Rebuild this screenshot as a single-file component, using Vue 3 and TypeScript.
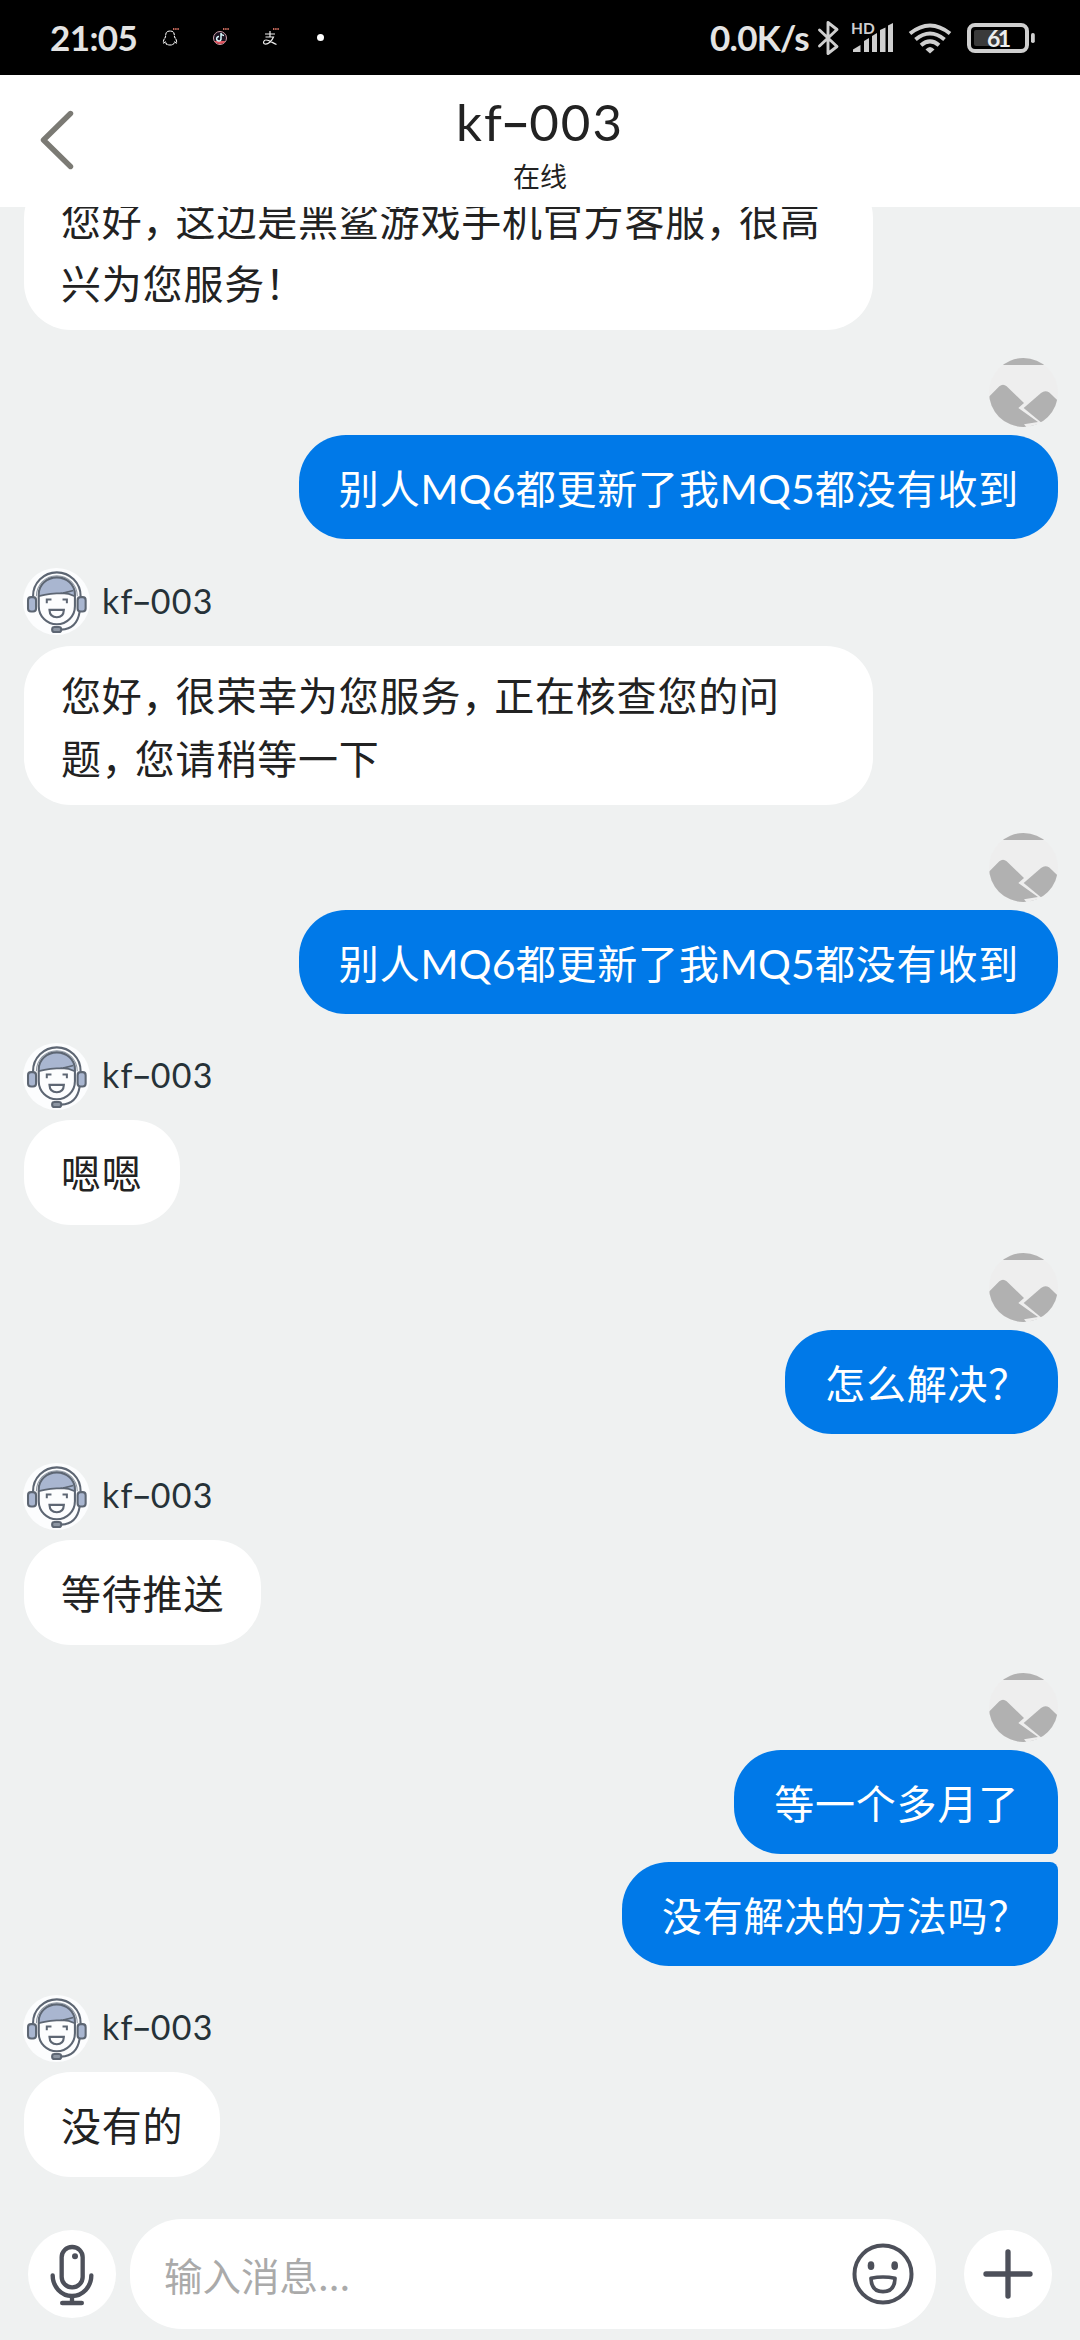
<script setup lang="ts">
interface Bubble {
  lines: string[]
}
interface Group {
  from: 'agent' | 'user'
  headless?: boolean
  bubbles: Bubble[]
}
interface Run {
  text: string
  kind: 'han' | 'comma' | 'mark' | 'latin'
}

const agentName = ['kf', '-', '003']

const groups: Group[] = [
  {
    from: 'agent',
    headless: true,
    bubbles: [{ lines: ['您好，这边是黑鲨游戏手机官方客服，很高', '兴为您服务！'] }],
  },
  { from: 'user', bubbles: [{ lines: ['别人MQ6都更新了我MQ5都没有收到'] }] },
  {
    from: 'agent',
    bubbles: [{ lines: ['您好，很荣幸为您服务，正在核查您的问', '题，您请稍等一下'] }],
  },
  { from: 'user', bubbles: [{ lines: ['别人MQ6都更新了我MQ5都没有收到'] }] },
  { from: 'agent', bubbles: [{ lines: ['嗯嗯'] }] },
  { from: 'user', bubbles: [{ lines: ['怎么解决？'] }] },
  { from: 'agent', bubbles: [{ lines: ['等待推送'] }] },
  {
    from: 'user',
    bubbles: [{ lines: ['等一个多月了'] }, { lines: ['没有解决的方法吗？'] }],
  },
  { from: 'agent', bubbles: [{ lines: ['没有的'] }] },
]

function kindOf(text: string): Run['kind'] {
  if (text === '，') return 'comma'
  if (/[！？]/.test(text)) return 'mark'
  return /[A-Z0-9]/.test(text) ? 'latin' : 'han'
}

// Punctuation is set tighter than the ideographs around it.
function runs(line: string): Run[] {
  const parts = line.match(/[，！？]|[A-Z0-9]+|[^，！？A-Z0-9]+/g) ?? []
  return parts.map((text) => ({ text, kind: kindOf(text) }))
}
</script>

<template>
  <div class="screen">
    <div class="status">
      <span class="clock">21:05</span>
      <div class="notices">
        <svg width="20" height="24" viewBox="0 0 20 24">
          <path d="M9 5C5 5 4.500 8 4.500 11C3 13 2 15 2.500 17L4.500 16C5 18 6 19 9 19C12 19 13 18 13.500 16L15.500 17C16 15 15 13 13.500 11C13.500 8 13 5 9 5Z" fill="none" stroke="#eee" stroke-width="1.100" stroke-dasharray="3 0.600" />
          <path d="M12 3h6" stroke="#c96a5c" stroke-width="2" stroke-dasharray="1.400 0.800" />
        </svg>
        <svg width="20" height="24" viewBox="0 0 20 24">
          <circle cx="9" cy="12" r="6.500" fill="#1b1220" stroke="#cfa3ad" stroke-width="1" />
          <path d="M3.500 15H14.500A6.500 6.500 0 0 1 3.500 15Z" fill="#e0555f" />
          <path d="M10 7V12.500A2.200 2.200 0 1 1 8 10.600M10 7.500Q11 9.500 13 9.500" fill="none" stroke="#d8fbff" stroke-width="1.500" />
          <path d="M12 3h6" stroke="#c96a5c" stroke-width="2" stroke-dasharray="1.400 0.800" />
        </svg>
        <svg width="20" height="24" viewBox="0 0 20 24">
          <path d="M4 8H14M9 5V11M4.500 11H12.500C11 15 7 18.500 4 18C1.500 17.500 2.500 14 5 14C8 14 11 16.500 15.500 18.500" fill="none" stroke="#eee" stroke-width="1.200" />
          <path d="M12 3h6" stroke="#c96a5c" stroke-width="2" stroke-dasharray="1.400 0.800" />
        </svg>
        <i class="more"></i>
      </div>
      <span class="speed">0.0K/s</span>
      <svg class="radio" width="222" height="40" viewBox="814 17 222 40">
        <path d="M819.500 29L837 45.500L828 52.500V21.500L837 28.500L819.500 45" fill="none" stroke="#cfcfcf" stroke-width="2.900" stroke-linejoin="round" stroke-linecap="round" />
        <text x="851" y="32.500" class="hd">HD</text>
        <g fill="#cfcfcf">
          <path d="M853 51V48.500L860.500 44V51Z" />
          <path d="M864 51V40L869 37V51Z" />
          <path d="M872 51V35L877 32V51Z" />
          <path d="M880 51V29L885.500 26.500V51Z" />
          <path d="M888 51V24.500L893 22V51Z" />
          <path d="M930 52.500L925.500 48.500Q930 43.500 934.500 48.500Z" />
        </g>
        <g fill="none" stroke="#cfcfcf" stroke-width="4">
          <path d="M910 32.500Q930 16.500 950 32.500" />
          <path d="M915.500 38.500Q930 26.500 944.500 38.500" />
          <path d="M921 44.300Q930 36.500 939 44.300" />
        </g>
        <rect x="969" y="24" width="58" height="26" rx="6" fill="none" stroke="#cfcfcf" stroke-width="4" />
        <rect x="974" y="29" width="30" height="16" rx="2" fill="#3a3a3a" />
        <rect x="1031" y="32" width="3.800" height="10" rx="1.800" fill="#cfcfcf" />
        <text x="987" y="45.500" class="level">61</text>
      </svg>
    </div>

    <header class="header">
      <svg class="back" width="36" height="62" viewBox="0 0 36 62">
        <path d="M32.500 4.500L5.500 31L32.500 57.500" fill="none" stroke="#7b7a74" stroke-width="5.400" stroke-linejoin="round" stroke-linecap="round" />
      </svg>
      <div class="heading">
        <h1 class="title"><span>{{ agentName[0] }}</span><span class="dash">{{ agentName[1] }}</span><span>{{ agentName[2] }}</span></h1>
        <p class="presence">在线</p>
      </div>
    </header>

    <main class="chat">
      <section v-for="(group, g) in groups" :key="g" class="group" :class="[group.from, { headless: group.headless }]">
        <div v-if="!group.headless && group.from === 'agent'" class="sender">
          <svg class="face" width="67" height="67" viewBox="0 0 200 200">
            <circle cx="100" cy="100" r="100" fill="#fcfdfe" />
            <path d="M47 84V76A54 49 0 0 1 155 76V84Q130 74 112 76Q80 76 47 84Z" fill="#a9b6d0" />
            <g fill="none" stroke="#5d6673" stroke-width="6.200">
              <path d="M30 84A71 71 0 0 1 172 84" />
              <path d="M40 84A61 61 0 0 1 162 84" stroke-width="3" stroke="#8d96a3" />
              <path d="M47 78V114A54 54 0 0 0 155 114V78A54 50 0 0 0 47 78Z" />
              <path d="M47 84Q80 75 120 75L150 67M112 75Q135 74 155 84" stroke-width="5" />
              <rect x="15" y="87" width="24" height="43" rx="9" fill="#a9b6d0" />
              <rect x="163" y="87" width="24" height="43" rx="9" fill="#a9b6d0" />
              <path d="M71 105V94H85M118 94H131V105" stroke-width="6" />
              <path d="M79 125H122Q121 147 101 147Q80 147 79 125Z" />
              <path d="M169 131Q161 182 114 184" />
              <rect x="87" y="176" width="27" height="15" rx="7" fill="#8d96a3" />
            </g>
          </svg>
          <span class="name"><span>{{ agentName[0] }}</span><span class="dash">{{ agentName[1] }}</span><span>{{ agentName[2] }}</span></span>
        </div>
        <svg v-if="group.from === 'user'" class="portrait" width="69" height="69" viewBox="0 0 207 207">
          <g fill="#b1b1b1">
            <rect width="207" height="207" fill="#eee" />
            <rect width="207" height="21" />
            <path d="M0 116L31 85Q42 76 53 85L105 135L88 150L147 192L105 199L112 207H0Z" />
            <path d="M104 150L156 105Q168 95 180 103L207 128V207H175L154 191Z" />
            <path d="M123 205L146 199V201L128 207Z" />
          </g>
        </svg>
        <div
          v-for="(bubble, b) in group.bubbles"
          :key="b"
          class="bubble"
          :class="{
            tall: bubble.lines.length > 1,
            opens: group.bubbles.length > 1 && b === 0,
            closes: group.bubbles.length > 1 && b === group.bubbles.length - 1,
          }"
        >
          <p v-for="line in bubble.lines" :key="line" class="line"><span v-for="(run, r) in runs(line)" :key="r" :class="run.kind">{{ run.text }}</span></p>
        </div>
      </section>
    </main>

    <footer class="composer">
      <button class="round">
        <svg width="88" height="88" viewBox="0 0 264 264" fill="none" stroke="#4d505a" stroke-linecap="round">
          <rect x="101" y="51" width="63" height="121" rx="31" stroke-width="13" />
          <path d="M74 136A58 62 0 0 0 190 136M132 198V218" stroke-width="13" />
          <path d="M103 219H161" stroke-width="14" />
          <circle cx="141" cy="79" r="9" fill="#4d505a" stroke="none" />
        </svg>
      </button>
      <div class="field">
        <span class="hint">输入消息...</span>
        <svg width="62" height="62" viewBox="0 0 186 186" fill="none" stroke="#4d505a">
          <circle cx="93" cy="93" r="85.500" stroke-width="12" />
          <ellipse cx="57" cy="68" rx="10" ry="13" fill="#4d505a" stroke="none" />
          <ellipse cx="128" cy="68" rx="10" ry="13" fill="#4d505a" stroke="none" />
          <path d="M57 106Q93 98 129 106Q128 146 93 146Q58 146 57 106Z" stroke-width="11" stroke-linejoin="round" />
        </svg>
      </div>
      <button class="round">
        <svg width="88" height="88" viewBox="0 0 264 264" fill="none" stroke="#4d505a" stroke-linecap="round">
          <path d="M66 132H198M132 66V198" stroke-width="16" />
        </svg>
      </button>
    </footer>
  </div>
</template>

<style>
body {
  margin: 0;
}
</style>

<style scoped>
.screen {
  display: flex;
  flex-direction: column;
  width: 1080px;
  height: 2340px;
  overflow: hidden;
  background: #eff1f1;
  font-family: Lato, 'Noto Sans CJK SC', sans-serif;
  color: #222;
}
.status {
  display: flex;
  align-items: center;
  flex: none;
  height: 75px;
  box-sizing: border-box;
  padding: 0 44px 0 50px;
  background: #000;
  color: #e4e4e4;
  font-weight: 700;
  font-size: 35px;
  line-height: 75px;
  white-space: nowrap;
}
.clock {
  width: 111px;
  letter-spacing: -0.600px;
}
.notices {
  display: flex;
  align-items: center;
  gap: 30px;
}
.notices svg {
  display: block;
}
.more {
  width: 7px;
  height: 7px;
  margin-left: 6px;
  border-radius: 50%;
  background: #fff;
}
.speed {
  margin-left: auto;
  margin-right: 5px;
  letter-spacing: -0.700px;
}
.radio {
  display: block;
  flex: none;
}
.hd {
  font: 700 15.500px Lato, sans-serif;
  fill: #cfcfcf;
}
.level {
  font: 700 23px Lato, sans-serif;
  letter-spacing: -2.500px;
  fill: #eee;
}
.header {
  display: grid;
  grid-template-columns: 120px 1fr 120px;
  flex: none;
  height: 132px;
  background: #fff;
}
.back {
  display: block;
  margin: 34px 0 0 38px;
}
.heading {
  text-align: center;
}
.title {
  margin: 16px 0 0;
  font-size: 51px;
  font-weight: 400;
  line-height: 62px;
  letter-spacing: 2px;
}
.dash {
  display: inline-block;
  font-family: Inter, sans-serif;
  transform: scaleX(1.300);
}
.presence {
  margin: 8px 0 0;
  font-size: 27px;
  line-height: 30px;
}
.chat {
  display: flex;
  flex-direction: column;
  flex: 1;
  min-height: 0;
  overflow: hidden;
}
.group {
  display: flex;
  flex-direction: column;
  flex: none;
  align-items: flex-start;
  padding: 0 22px 28px 24px;
}
.group.headless {
  margin-top: -36px;
}
.group.user {
  align-items: flex-end;
  padding-bottom: 29px;
}
.sender {
  display: flex;
  align-items: center;
  height: 67px;
  margin: 0 0 10.500px -1px;
}
.face {
  display: block;
}
.name {
  margin: -1px 0 0 12px;
  font-size: 34px;
  line-height: 50px;
  letter-spacing: 1.300px;
  color: #263238;
}
.portrait {
  display: block;
  margin-bottom: 8px;
  border-radius: 50%;
}
.bubble {
  box-sizing: border-box;
  height: 104.500px;
  padding: 21px 37px 0 37px;
  border-radius: 47px;
  background: #fff;
}
.bubble.tall {
  width: 849px;
  height: 159px;
  padding-top: 17px;
}
.user .bubble {
  height: 104px;
  padding: 21px 39px 0 40px;
  background: #0079e8;
  color: #fff;
}
.user .opens {
  border-bottom-right-radius: 8px;
  margin-bottom: 8px;
}
.user .closes {
  border-top-right-radius: 8px;
}
.line {
  margin: 0;
  height: 63px;
  font-size: 40px;
  line-height: 63px;
  letter-spacing: 0.800px;
  white-space: nowrap;
}
.han,
.comma,
.mark {
  font-family: 'Noto Sans CJK SC', sans-serif;
}
.comma {
  letter-spacing: -7px;
}
.mark {
  letter-spacing: -9.300px;
}
.latin {
  font-size: 41px;
  letter-spacing: 0.200px;
}
.composer {
  display: flex;
  align-items: center;
  justify-content: space-between;
  flex: none;
  height: 110px;
  padding: 0 28px;
  margin-bottom: 11px;
}
.round {
  width: 88px;
  height: 88px;
  padding: 0;
  border: 0;
  border-radius: 50%;
  background: #fff;
}
.round svg,
.field svg {
  display: block;
}
.field {
  display: flex;
  align-items: center;
  justify-content: space-between;
  box-sizing: border-box;
  width: 806px;
  height: 110px;
  margin-right: 14px;
  padding: 0 22px 0 34px;
  border-radius: 52px;
  background: #fff;
}
.hint {
  font-family: 'Noto Sans CJK SC', sans-serif;
  font-size: 38.500px;
  line-height: 60px;
  color: #aaa;
}
</style>
